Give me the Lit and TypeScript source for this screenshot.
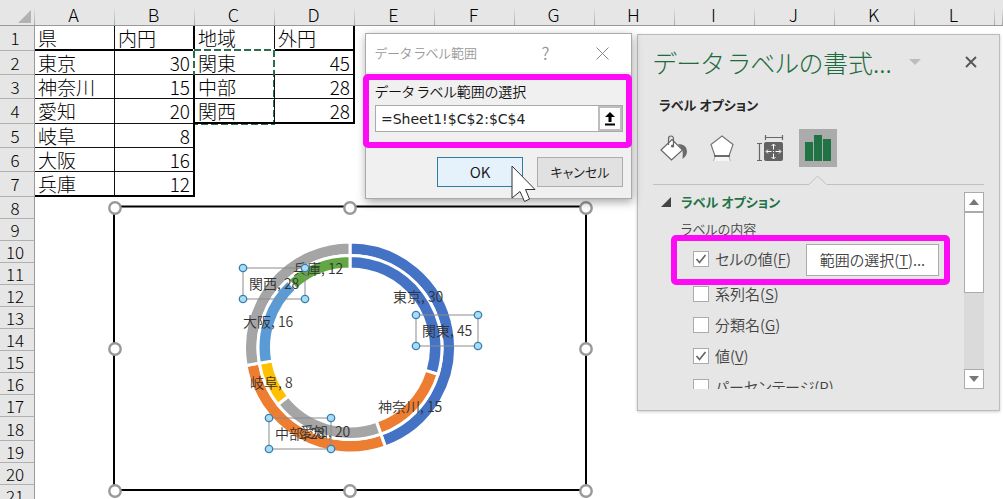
import { LitElement, html, css, svg, nothing } from "lit";
import { customElement } from "lit/decorators.js";
import { classMap } from "lit/directives/class-map.js";

const COLUMNS = ["A", "B", "C", "D", "E", "F", "G", "H", "I", "J", "K", "L", ""];

const ROWS: string[][] = [
  ["県", "内円", "地域", "外円"],
  ["東京", "30", "関東", "45"],
  ["神奈川", "15", "中部", "28"],
  ["愛知", "20", "関西", "28"],
  ["岐阜", "8"],
  ["大阪", "16"],
  ["兵庫", "12"],
];
const ROW_HEIGHTS = [25, 24, 24, 25, 24, 24, 25, 22, 22, 22, 22, 22, 22, 22, 22, 22, 22, 24, 22, 22, 22];

@customElement("work-sheet")
class WorkSheet extends LitElement {
  static styles = css`
    :host { display: block; overflow: hidden; background: #fff; }
    table { width: 100%; table-layout: fixed; border-collapse: separate; border-spacing: 0;
      font: 300 19px/20px "Noto Sans CJK JP", sans-serif; color: #000; }
    th, td { box-sizing: border-box; padding: 0; font-weight: 300; white-space: nowrap; }
    .stub { width: 35px; }
    .col { width: 80px; }
    thead th { height: 26px; background: linear-gradient(#e6e6e6 30%, #a8a8a8) right / 1px 100% no-repeat #e6e6e6;
      border-bottom: 1px solid #999; font-size: 18px; padding: 3px 3px 0 0; }
    .corner svg { display: block; margin: 4px 0 0 18px; }
    tbody th { background: #e6e6e6; border-right: 1px solid #999; border-bottom: 1px solid #b0b0b0;
      font-size: 17px; line-height: 18px; padding-right: 4px; }
    .cell { border-right: 1px solid #111; border-bottom: 1px solid #111; padding: 0 3px; position: relative; }
    .num { text-align: right; }
    .thick-right { border-right: 2px solid #000; }
    .thick-bottom { border-bottom: 2px solid #000; }
    .ants { position: absolute; left: -2px; top: -2px; overflow: visible; }
  `;

  private cell(r: number, c: number) {
    const value = ROWS[r]?.[c];
    if (value === undefined) return html`<td></td>`;
    const last = c < 2 ? 6 : 3;
    return html`<td class=${classMap({
      cell: true,
      num: r > 0 && c % 2 === 1,
      "thick-right": c % 2 === 1,
      "thick-bottom": r === 0 || r === last,
    })}>${value}${r === 1 && c === 2 ? this.selection() : nothing}</td>`;
  }

  private selection() {
    return html`<svg class="ants" width="82" height="76" aria-hidden="true">
      <rect x="1" y="1" width="80" height="74" fill="none" stroke="#fff" stroke-width="2"/>
      <rect x="1" y="1" width="80" height="74" fill="none" stroke="#2c6b4c" stroke-width="2" stroke-dasharray="7 3"/>
    </svg>`;
  }

  render() {
    return html`<table>
      <colgroup><col class="stub">${COLUMNS.map((c) => (c ? html`<col class="col">` : html`<col>`))}</colgroup>
      <thead><tr>
        <th class="corner"><svg width="13" height="13" aria-hidden="true"><path d="M13 0v13H0z" fill="#b2b2b2"/></svg></th>
        ${COLUMNS.map((c) => html`<th>${c}</th>`)}
      </tr></thead>
      <tbody>${ROW_HEIGHTS.map((h, r) => html`<tr style="height:${h}px">
        <th>${r + 1}</th>${COLUMNS.map((_, c) => this.cell(r, c))}
      </tr>`)}</tbody>
    </table>`;
  }
}

const CX = 350;
const CY = 347.5;
const OUTER = [[45, "#4472c4"], [28, "#ed7d31"], [28, "#a5a5a5"]] as [number, string][];
const INNER = [[30, "#4472c4"], [15, "#ed7d31"], [20, "#a5a5a5"], [8, "#ffc000"], [16, "#5b9bd5"], [12, "#62a744"]] as [number, string][];
const LABELS = [
  ["兵庫, 12", 293, 274], ["東京, 30", 393, 302], ["大阪, 16", 243, 327],
  ["岐阜, 8", 250, 388], ["神奈川, 15", 378, 412], ["愛知, 20", 300, 437],
] as [string, number, number][];
const SELECTED = [["関西, 28", 243, 268], ["関東, 45", 416, 315], ["中部, 28", 269, 418]] as [string, number, number][];

@customElement("donut-chart")
class DonutChart extends LitElement {
  static styles = css`
    :host { display: block; }
    svg { display: block; }
    text { font: 350 14px "Noto Sans CJK JP", sans-serif; fill: #333; }
  `;

  private ring(data: [number, string][], r1: number, r0: number) {
    const total = data.reduce((s, [v]) => s + v, 0);
    const at = (r: number, f: number) =>
      `${(CX + r * Math.sin(f * 2 * Math.PI)).toFixed(2)} ${(CY - r * Math.cos(f * 2 * Math.PI)).toFixed(2)}`;
    let acc = 0;
    return data.map(([v, color]) => {
      const a = acc / total;
      acc += v;
      const b = acc / total;
      const large = b - a > 0.5 ? 1 : 0;
      return svg`<path fill=${color} stroke="#fff" stroke-width="3"
        d="M${at(r1, a)}A${r1} ${r1} 0 ${large} 1 ${at(r1, b)}L${at(r0, b)}A${r0} ${r0} 0 ${large} 0 ${at(r0, a)}Z"/>`;
    });
  }

  render() {
    const grips = [[115, 208], [350, 208], [586, 208], [115, 349], [586, 349], [115, 491], [350, 491], [586, 491]];
    return html`<svg width="490" height="302" viewBox="106 198 490 302" role="img" aria-label="ドーナツ グラフ">
      <rect x="114" y="206.500" width="472" height="283.500" fill="#fff" stroke="#000" stroke-width="2"/>
      ${this.ring(OUTER, 105.5, 92)}${this.ring(INNER, 92, 78.5)}
      ${LABELS.map(([t, x, y]) => svg`<text x=${x} y=${y}>${t}</text>`)}
      ${SELECTED.map(([t, x, y]) => svg`
        <text x=${x + 6} y=${y + 21}>${t}</text>
        <rect x=${x} y=${y} width="62" height="31" fill="none" stroke="#8c8c8c"/>
        ${[[0, 0], [62, 0], [0, 31], [62, 31]].map(([dx, dy]) => svg`
          <circle cx=${x + dx} cy=${y + dy} r="3.7" fill="#a9dcf5" stroke="#3a7fae" stroke-width="1.300"/>`)}`)}
      ${grips.map(([x, y]) => svg`<circle cx=${x} cy=${y} r="5.700" fill="#fff" stroke="#999" stroke-width="2.400"/>`)}
    </svg>`;
  }
}

@customElement("range-dialog")
class RangeDialog extends LitElement {
  static styles = css`
    :host { display: block; box-sizing: border-box; border: 1px solid #aaa; background: #f0f0f0;
      box-shadow: 1px 3px 9px rgba(0, 0, 0, .35);
      font: 350 14px/20px "Noto Sans CJK JP", sans-serif; font-feature-settings: "palt"; color: #111; }
    button { font: inherit; color: inherit; padding: 0; box-sizing: border-box; border-radius: 0; }
    .bar { display: flex; align-items: center; height: 38px; background: #fff; color: #999; padding: 0 0 0 9px; }
    .bar h2 { flex: 1; margin: 0; font-size: 13px; font-weight: 350; }
    .bar button { width: 57px; height: 30px; border: 0; background: none; display: grid; place-items: center; font-size: 17px; }
    .body { padding: 9px 8px 11px 9px; }
    label { display: block; font-size: 14px; height: 24px; }
    .field { display: flex; height: 27px; box-sizing: border-box; border: 1px solid #aaa; background: #fff; }
    input { flex: 1; min-width: 0; border: 0; padding: 0 5px; background: none; outline: none; color: #222;
      font: 14px "DejaVu Sans", sans-serif; }
    .pick { width: 24px; border: 2px solid #bdbdbd; background: #fcfcfc; display: grid; place-items: center; }
    .actions { display: flex; justify-content: flex-end; gap: 14px; margin-top: 25px; }
    .actions button { width: 86px; height: 30px; border: 1px solid #adadad; background: #e1e1e1; font-size: 13px; }
    .actions .ok { border-color: #2a7ea6; background: #e5f1fb; font-size: 15px; }
    .mark { position: absolute; left: -3px; right: -1px; top: 40px; height: 74px; box-sizing: border-box;
      border: 6px solid #fd0bf5; border-radius: 5px; pointer-events: none; }
    .cursor { position: absolute; left: 145px; top: 131px; pointer-events: none; }
  `;

  render() {
    return html`
      <div class="bar">
        <h2>データ ラベル範囲</h2>
        <button aria-label="ヘルプ">?</button>
        <button aria-label="閉じる"><svg width="13" height="13"><path d="M.5.5l12 12M12.500.5l-12 12" stroke="#888" fill="none"/></svg></button>
      </div>
      <div class="body">
        <label for="range">データ ラベル範囲の選択</label>
        <div class="field">
          <input id="range" value="=Sheet1!$C$2:$C$4">
          <button class="pick" aria-label="範囲を選択"><svg width="10" height="14"><path d="M5 0l5 5H6.500v5h-3V5H0zM0 11.500h10v2H0z" fill="#000"/></svg></button>
        </div>
        <div class="actions"><button class="ok">OK</button><button>キャンセル</button></div>
      </div>
      <div class="mark"></div>
      <svg class="cursor" width="26" height="38" aria-hidden="true">
        <path d="M1 1v32l8-6.500 4.500 10 5-2.500-4-9.500H24z" fill="#fff" stroke="#333"/>
      </svg>`;
  }
}

@customElement("format-pane")
class FormatPane extends LitElement {
  static styles = css`
    :host { display: block; box-sizing: border-box; border: 1px solid #bbb; background: #e6e6e6;
      box-shadow: 0 1px 3px rgba(0, 0, 0, .2); padding: 10px 15px 21px;
      font: 350 15px/20px "Noto Sans CJK JP", sans-serif; font-feature-settings: "palt"; color: #444; }
    button { font: inherit; color: inherit; padding: 0; border: 0; background: none; border-radius: 0;
      display: grid; place-items: center; }
    header { display: flex; align-items: center; height: 34px; }
    h2 { flex: 1; margin: 0; font-size: 25px; line-height: 34px; font-weight: 300; color: #1e6b41; white-space: nowrap; }
    .menu { width: 20px; height: 20px; margin-right: 32px; }
    .shut { width: 27px; height: 20px; }
    h3 { margin: 16px 0 0 6px; font-size: 13px; line-height: 20px; font-weight: 700; color: #262626; }
    .tabs { display: flex; gap: 10px; margin-top: 14px; padding-left: 2px; }
    .tabs button { width: 38px; height: 38px; }
    .tabs .on { background: #ababab; }
    .rule { display: flex; margin-top: 8px; height: 10px; }
    .rule i { flex: 1; border-bottom: 1px solid #c0c0c0; }
    .rule i:first-child { flex: 0 0 156px; }
    .rule svg { flex: none; display: block; }
    .scroll { display: flex; justify-content: space-between; height: 204px; }
    .content { flex: 1; min-width: 0; overflow: hidden; padding-top: 7px; box-sizing: border-box; }
    h4 { display: flex; align-items: center; gap: 10px; margin: 0 0 0 8px; font-size: 13px; line-height: 20px;
      font-weight: 700; color: #217346; }
    .caption { margin: 7px 0 0 28px; font-size: 13px; line-height: 20px; }
    .option { display: flex; align-items: center; height: 31px; padding-left: 40px; }
    .option.first { height: 39px; }
    .option label { display: flex; align-items: center; gap: 6px; }
    u { text-underline-offset: 2px; text-decoration-thickness: 1px; }
    input { appearance: none; width: 16px; height: 16px; margin: 0; box-sizing: border-box; background: #fff;
      border: 1px solid #ababab; }
    input:checked { background: #fff url("data:image/svg+xml,%3Csvg xmlns='http://www.w3.org/2000/svg' viewBox='0 0 14 14'%3E%3Cpath d='M2.500 7l3 3.500 6-7.500' fill='none' stroke='%23666' stroke-width='1.700'/%3E%3C/svg%3E"); }
    .choose { width: 133px; height: 32px; margin-left: 15px; margin-top: 3px; background: #fff; border: 1px solid #ababab; box-sizing: border-box; }
    .bar { flex: none; display: flex; flex-direction: column; width: 20px; height: 197px; margin-top: 7px; background: #dadada; }
    .bar button, .thumb { box-sizing: border-box; height: 20px; background: #fff; border: 1px solid #ababab; width: 20px; }
    .thumb { height: 81px; }
    .bar .down { margin-top: auto; }
    .mark { position: absolute; left: 33px; right: 49px; top: 200px; height: 50px; box-sizing: border-box;
      border: 6px solid #fd0bf5; border-radius: 5px; pointer-events: none; }
  `;

  private option(text: string, key: string, checked = false) {
    return html`<label><input type="checkbox" .checked=${checked}><span>${text}(<u>${key}</u>)</span></label>`;
  }

  render() {
    return html`
      <header>
        <h2>データ ラベルの書式...</h2>
        <button class="menu" aria-label="メニュー"><svg width="12" height="6"><path d="M0 0h12L6 6z" fill="#bdbdbd"/></svg></button>
        <button class="shut" aria-label="閉じる"><svg width="12" height="12"><path d="M1 1l10 10M11 1L1 11" stroke="#555" stroke-width="1.800"/></svg></button>
      </header>
      <h3>ラベル オプション</h3>
      <div class="tabs">
        <button aria-label="塗りつぶしと線"><svg width="28" height="28" viewBox="0 0 28 28">
          <path d="M1 16L12 5.500 22.500 16 11.500 26z" fill="#fff" stroke="#666" stroke-width="1.200"/>
          <path d="M8.500 11V5q0-3 2.500-3t2.500 3v8" fill="none" stroke="#666" stroke-width="1.200"/><circle cx="12.500" cy="12" r="1.600" fill="#666"/>
          <path d="M18 10q9 0 9 7.500 0 4-4.500 7.500.500-5 0-9z" fill="#6a6a6a"/></svg></button>
        <button aria-label="効果"><svg width="26" height="28" viewBox="0 0 26 28">
          <path d="M13 2l11 8.500L20 22H6L2 10.500z" fill="#fff" stroke="#777" stroke-width="1.200"/>
          <path d="M5 22h16" stroke="#555" stroke-width="1.500"/><path d="M6 23h14l2 4H4z" fill="#f6f6f6"/>
          <path d="M6 23l-1.500 4M20 23l1.500 4" stroke="#aaa"/></svg></button>
        <button aria-label="サイズとプロパティ"><svg width="28" height="28" viewBox="0 0 28 28">
          <g fill="none" stroke="#666" stroke-width="1.200"><path d="M9.500 3.500h17M9.500 1v5M26.500 1v5M3.500 10v16M1 9.500h5M1 26.500h5"/></g>
          <rect x="8" y="8" width="19" height="19" rx="2" fill="#636363"/>
          <path d="M17.500 10.500v14M10.500 17.500h14" stroke="#fff" stroke-dasharray="5 1.500 1 1.500"/>
          <path d="M15.500 12l2-2 2 2M15.500 23l2 2 2-2M12 15.500l-2 2 2 2M23 15.500l2 2-2 2" fill="none" stroke="#fff"/></svg></button>
        <button class="on" aria-label="ラベル オプション"><svg width="26" height="26" viewBox="0 0 26 26">
          <path d="M0 7h8v19H0zM9 0h8v26H9zM18 4h8v22h-8z" fill="#217346"/></svg></button>
      </div>
      <div class="rule"><i></i><svg width="18" height="10"><path d="M0 9.500L8.500 1l9 8.500" fill="none" stroke="#c0c0c0"/></svg><i></i></div>
      <div class="scroll">
        <div class="content">
          <h4><svg width="10" height="10"><path d="M10 0v10H0z" fill="#444"/></svg>ラベル オプション</h4>
          <p class="caption">ラベルの内容</p>
          <div class="option first">${this.option("セルの値", "F", true)}
            <button class="choose"><span>範囲の選択(<u>T</u>)...</span></button></div>
          <div class="option">${this.option("系列名", "S")}</div>
          <div class="option">${this.option("分類名", "G")}</div>
          <div class="option">${this.option("値", "V", true)}</div>
          <div class="option">${this.option("パーセンテージ", "P")}</div>
        </div>
        <div class="bar">
          <button aria-label="上へ"><svg width="10" height="6"><path d="M5 0l5 6H0z" fill="#777"/></svg></button>
          <div class="thumb"></div>
          <button class="down" aria-label="下へ"><svg width="10" height="6"><path d="M0 0h10L5 6z" fill="#777"/></svg></button>
        </div>
      </div>
      <div class="mark"></div>`;
  }
}

@customElement("app-root")
class AppRoot extends LitElement {
  static styles = css`
    :host { display: block; position: relative; height: 100vh; overflow: hidden; background: #fff; }
    .chart { position: absolute; left: 106px; top: 198px; }
    .pane { position: absolute; right: 3px; top: 34px; width: 363px; }
    .dialog { position: absolute; left: 365px; top: 33px; width: 267px; }
  `;

  render() {
    return html`
      <work-sheet></work-sheet>
      <donut-chart class="chart"></donut-chart>
      <format-pane class="pane"></format-pane>
      <range-dialog class="dialog"></range-dialog>`;
  }
}
